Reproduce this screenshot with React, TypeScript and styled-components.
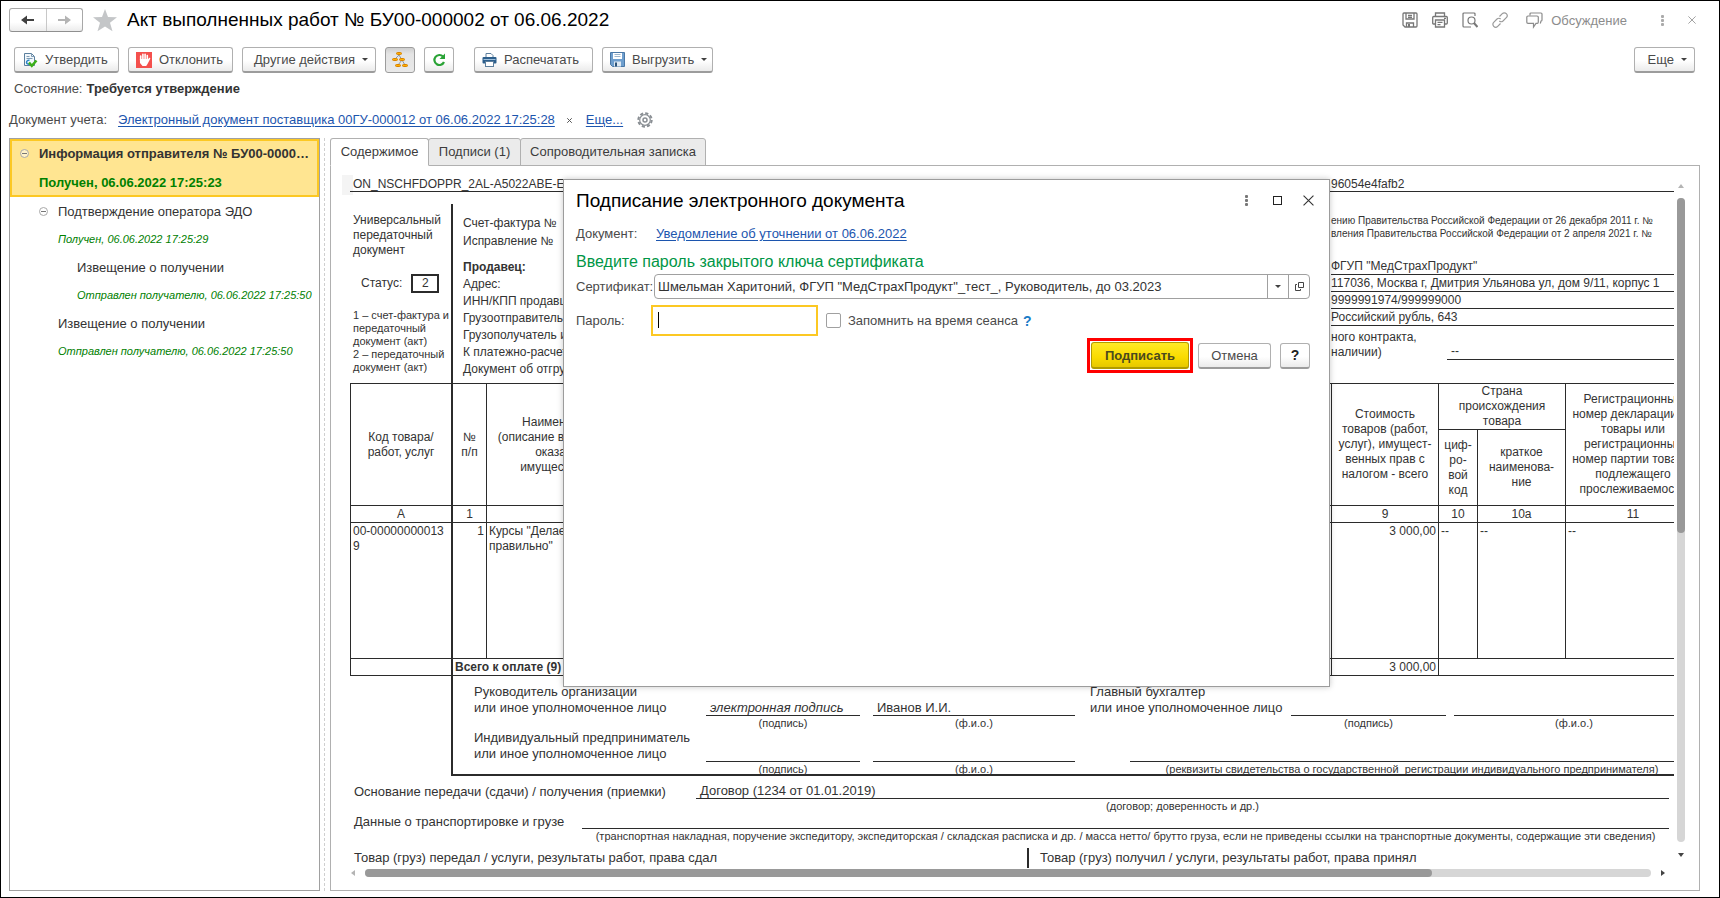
import React from "react";
import styled, { createGlobalStyle, css } from "styled-components";

const ink = "#333333";
const line = "#2b2b2b";

const GlobalStyle = createGlobalStyle`
  * { box-sizing: border-box; }
  body { margin: 0; background: #fff; }
  body, button, input, table {
    font-family: "Liberation Sans", Arial, sans-serif;
    font-size: 13px;
    color: ${ink};
  }
  button { cursor: pointer; }
  svg { display: block; flex: none; }
`;

/* ---------- window ---------- */

const Window = styled.div`
  position: relative;
  display: flex;
  flex-direction: column;
  min-height: 100vh;
  padding: 7px 19px 6px 8px;
  border: 1px solid #000;
  overflow: hidden;
`;

const TitleBar = styled.header`
  display: flex;
  align-items: center;
  height: 24px;
`;

const NavButtons = styled.div`
  display: flex;
  width: 74px;
  height: 24px;
  border: 1px solid #a8a8a8;
  border-bottom-color: #8f8f8f;
  border-radius: 3px;
  background: linear-gradient(#fff 60%, #ececec);
`;

const NavButton = styled.button`
  flex: 1;
  display: flex;
  align-items: center;
  justify-content: center;
  padding: 0;
  border: 0;
  background: none;
  & + & { border-left: 1px solid #c8c8c8; }
`;

const PlainButton = styled.button`
  display: flex;
  align-items: center;
  justify-content: center;
  padding: 0;
  border: 0;
  background: none;
  color: #8c8c8c;
`;

const StarButton = styled(PlainButton)`
  margin: 0 10px;
`;

const PageTitle = styled.h1`
  margin: 0;
  flex: 1;
  font-size: 19px;
  font-weight: 400;
  line-height: 26px;
  color: #000;
`;

const TitleTools = styled.div`
  display: flex;
  align-items: center;
  gap: 14px;
  padding-right: 4px;
`;

const DiscussButton = styled(PlainButton)`
  gap: 8px;
  margin: 0 20px 0 4px;
`;

const CloseButton = styled(PlainButton)`
  margin-left: 10px;
`;

/* ---------- toolbar ---------- */

const Toolbar = styled.div`
  display: flex;
  align-items: center;
  gap: 9px;
  padding: 15px 5px 0 5px;
`;

const ToolButton = styled.button<{ $pressed?: boolean; $width: number; $align?: "start" | "end" }>`
  display: flex;
  align-items: center;
  justify-content: ${(p) => (p.$align ? `flex-${p.$align}` : "center")};
  gap: 7px;
  width: ${(p) => p.$width}px;
  height: 26px;
  padding: 0 ${(p) => (p.$align ? 7 : 0)}px;
  white-space: nowrap;
  color: #4a4a4a;
  border: 1px solid #b0b0b0;
  border-bottom: 2px solid #9c9c9c;
  border-radius: 3px;
  background: linear-gradient(#fff 55%, #ebebeb);
  ${(p) =>
    p.$pressed &&
    css`
      border-bottom-width: 1px;
      border-color: #9c9c9c;
      background: linear-gradient(#cfcfcf, #e4e4e4 25%, #e9e9e9);
    `}
`;

const Separator = styled.span`
  width: 2px;
`;

const Push = styled.span`
  flex: 1;
`;

const Caret = styled.span`
  width: 0;
  height: 0;
  border: 3px solid transparent;
  border-top-color: #404040;
  border-bottom: 0;
`;

const StateRow = styled.p`
  display: flex;
  gap: 4px;
  margin: 0;
  padding: 8px 5px 0;
  line-height: 16px;
  color: #4a4a4a;
  b { color: ${ink}; }
`;

const SourceRow = styled.div`
  display: flex;
  align-items: center;
  padding-top: 14px;
  line-height: 18px;
  color: #4a4a4a;
`;

const Link = styled.a`
  color: #1c55ae;
  text-decoration: underline;
  text-underline-offset: 2px;
`;

const SourceLink = styled(Link)`
  margin-left: 11px;
`;

const ClearButton = styled(PlainButton)`
  margin: 0 14px 0 12px;
`;

const GearButton = styled(PlainButton)`
  margin-left: 14px;
`;

/* ---------- body ---------- */

const Body = styled.main`
  flex: 1;
  display: flex;
  padding-top: 9px;
  min-height: 0;
`;

const Tree = styled.ul`
  width: 311px;
  flex: none;
  margin: 0;
  padding: 0;
  list-style: none;
  border: 1px solid #a0a0a0;
`;

const TreeItem = styled.li<{ $level: number; $selected?: boolean }>`
  display: grid;
  grid-template-columns: 19px 1fr;
  grid-template-rows: 28px 28px;
  align-items: center;
  padding-left: ${(p) => 10 + p.$level * 19}px;
  em {
    grid-column: 2;
    font-size: 11px;
    color: #008000;
    white-space: nowrap;
  }
  ${(p) =>
    p.$selected &&
    css`
      grid-template-rows: 24px 26px;
      row-gap: 4px;
      padding: 0 6px 0 8px;
      border: 2px solid #fcc823;
      background: #ffe591;
      font-weight: 700;
      em {
        font-size: 13px;
        font-style: normal;
      }
    `}
`;

const TreeName = styled.span`
  grid-column: 2;
  overflow: hidden;
  text-overflow: ellipsis;
  white-space: nowrap;
`;

const Splitter = styled.div`
  width: 1px;
  flex: none;
  margin: 0 5px 0 4px;
  border-left: 1px dashed #cfcfcf;
`;

const Panel = styled.section`
  flex: 1;
  min-width: 0;
  display: flex;
  flex-direction: column;
`;

const Tabs = styled.div`
  display: flex;
  height: 28px;
  margin-bottom: -1px;
`;

const Tab = styled.button<{ $active?: boolean; $width: number }>`
  width: ${(p) => p.$width}px;
  padding: 0 0 2px;
  margin-right: -1px;
  white-space: nowrap;
  color: #3c3c3c;
  border: 1px solid #b0b0b0;
  border-radius: 3px 3px 0 0;
  background: #ebebeb;
  ${(p) =>
    p.$active &&
    css`
      background: #fff;
      border-bottom-color: #fff;
      z-index: 1;
    `}
`;

const TabPane = styled.div`
  flex: 1;
  display: grid;
  grid-template-columns: minmax(0, 1fr) 8px;
  grid-template-rows: auto 8px;
  column-gap: 3px;
  row-gap: 1px;
  align-content: start;
  padding: 9px 14px 12px 11px;
  border: 1px solid #b0b0b0;
`;

const VScroll = styled.div`
  display: flex;
  flex-direction: column;
  align-items: center;
  justify-content: space-between;
  padding: 8px 0 10px;
`;

const HScroll = styled.div`
  display: flex;
  align-items: center;
  justify-content: space-between;
  padding: 0 8px;
`;

const Track = styled.div<{ $vertical?: boolean }>`
  flex: 1;
  display: flex;
  flex-direction: ${(p) => (p.$vertical ? "column" : "row")};
  align-self: stretch;
  margin: ${(p) => (p.$vertical ? "9px 0 10px" : "0 9px")};
  border-radius: 4px;
  background: #d6d6d6;
`;

const Thumb = styled.div<{ $share: number }>`
  flex: 0 0 ${(p) => p.$share}%;
  border-radius: 4px;
  background: #999;
`;

/* ---------- printed form ---------- */

const Sheet = styled.article`
  overflow: hidden;
  min-height: 693px;
  padding-left: 8px;
  font-size: 12px;
  line-height: 15px;
  position: relative;
`;

const SheetInner = styled.div`
  width: 1350px;
`;

const SelectedCell = styled.span`
  position: absolute;
  left: 0;
  top: 0;
  width: 11px;
  height: 20px;
  background: #f4f4f4;
`;

const FileLine = styled.div`
  position: relative;
  display: grid;
  grid-template-columns: 978px 1fr;
  height: 17px;
  padding-left: 3px;
  line-height: 18px;
  border-bottom: 1px solid ${line};
`;

const HeaderArea = styled.div`
  display: grid;
  grid-template-columns: 101px 1fr;
  height: 179px;
  margin-top: 12px;
`;

const StatusColumn = styled.div`
  padding: 9px 0 0 3px;
`;

const StatusLine = styled.div`
  display: flex;
  align-items: center;
  gap: 9px;
  margin: 16px 0;
  padding-left: 8px;
`;

const StatusBox = styled.b`
  width: 28px;
  height: 19px;
  border: 2px solid ${line};
  font-weight: 400;
  text-align: center;
`;

const Fine = styled.p<{ $size: number }>`
  margin: 0;
  font-size: ${(p) => p.$size}px;
  line-height: 13px;
  white-space: nowrap;
`;

const Parties = styled.div`
  display: grid;
  grid-template-columns: 878px 1fr;
  border-left: 2px solid ${line};
`;

const Labels = styled.div`
  padding: 11px 0 0 10px;
  line-height: 17px;
  div { height: 17px; }
  div:nth-child(2) { margin: 1px 0 9px; }
`;

const Values = styled.div`
  padding-top: 10px;
`;

const ValueRow = styled.div`
  height: 17px;
  line-height: 17px;
  white-space: nowrap;
  border-bottom: 1px solid ${line};
`;

const Decree = styled.div`
  height: 44px;
`;

const ContractRow = styled.div`
  display: grid;
  grid-template-columns: 116px 1fr;
  align-items: end;
  padding-top: 4px;
  span { white-space: nowrap; }
`;

const ContractValue = styled.div`
  padding: 0 0 0 4px;
  border-bottom: 1px solid ${line};
`;

const Goods = styled.table`
  width: 1350px;
  table-layout: fixed;
  border-collapse: separate;
  border-spacing: 0;
  border-bottom: 1px solid ${line};
  font-size: 12px;
`;

const Cell = styled.td<{ $thick?: boolean; $end?: boolean }>`
  height: 17px;
  padding: 1px 2px 0;
  line-height: 15px;
  font-weight: 400;
  text-align: ${(p) => (p.$end ? "right" : "left")};
  vertical-align: top;
  white-space: nowrap;
  border-top: 1px solid ${line};
  border-left: ${(p) => (p.$thick ? 2 : 1)}px solid ${line};
`;

const HeadCell = styled(Cell)`
  padding: 0 2px;
  text-align: center;
  vertical-align: middle;
`;

const MarkCell = styled(Cell)`
  text-align: center;
`;

const HeadRow = styled.tr<{ $height: number }>`
  height: ${(p) => p.$height}px;
`;

const Signatures = styled.div`
  display: grid;
  grid-template-columns: 232px 154px 13px 202px 15px 40px 161px 155px 8px 240px;
  grid-template-rows: 32px 14px 32px 14px;
  height: 100px;
  margin-left: 101px;
  padding: 8px 0 0 21px;
  font-size: 13px;
  border-left: 2px solid ${line};
  border-bottom: 2px solid ${line};
`;

const SignLabel = styled.div<{ $col: string }>`
  grid-column: ${(p) => p.$col};
  line-height: 16px;
  white-space: nowrap;
`;

const SignLine = styled.div<{ $col: string }>`
  grid-column: ${(p) => p.$col};
  display: flex;
  align-items: end;
  padding-left: 4px;
  border-bottom: 1px solid ${line};
`;

const Caption = styled.div<{ $col: string }>`
  grid-column: ${(p) => p.$col};
  font-size: 11px;
  line-height: 14px;
  text-align: center;
  white-space: pre;
`;

const BasisRow = styled.div<{ $label: number; $height: number }>`
  display: grid;
  grid-template-columns: ${(p) => p.$label}px 1fr;
  grid-template-rows: ${(p) => p.$height}px 14px;
  width: 1319px;
  font-size: 13px;
  > :first-child {
    align-self: end;
    padding-left: 4px;
  }
`;

const TransferRow = styled.div`
  display: grid;
  grid-template-columns: 677px 1fr;
  height: 18px;
  margin-top: 5px;
  font-size: 13px;
  line-height: 20px;
  > * { padding-left: 4px; }
  > :last-child {
    padding-left: 11px;
    border-left: 2px solid ${line};
  }
`;

/* ---------- dialog ---------- */

const Dialog = styled.section`
  position: absolute;
  left: 562px;
  top: 178px;
  width: 767px;
  height: 508px;
  padding: 8px 19px 0 12px;
  background: #fff;
  border: 1px solid #9c9c9c;
  box-shadow: 0 0 6px rgba(0, 0, 0, 0.22);
`;

const DialogHead = styled.div`
  display: flex;
  align-items: center;
  height: 25px;
  gap: 20px;
  margin-right: -4px;
  h2 {
    flex: 1;
    margin: 0;
    font-size: 19px;
    font-weight: 400;
    color: #000;
  }
`;

const DialogButton = styled(PlainButton)`
  width: 11px;
  height: 11px;
  color: #333;
`;

const Field = styled.div<{ $height: number }>`
  display: grid;
  grid-template-columns: 78px 1fr;
  align-items: center;
  height: ${(p) => p.$height}px;
  color: #4a4a4a;
`;

const DocumentField = styled(Field)`
  margin-top: 8px;
  grid-template-columns: 80px 1fr;
`;

const PasswordField = styled(Field)`
  margin-top: 6px;
`;

const Prompt = styled.h3`
  margin: 7px 0 2px;
  font-size: 16px;
  font-weight: 400;
  line-height: 20px;
  color: #009646;
`;

const Combo = styled.div`
  display: flex;
  height: 25px;
  border: 1px solid #a0a0a0;
  border-radius: 4px;
  input {
    flex: 1;
    min-width: 0;
    padding: 0 3px;
    border: 0;
    outline: 0;
    background: none;
  }
`;

const ComboButton = styled(PlainButton)`
  width: 21px;
  border-left: 1px solid #a0a0a0;
`;

const PasswordLine = styled.div`
  display: flex;
  align-items: center;
  margin-left: -3px;
`;

const PasswordBox = styled.div`
  position: relative;
  width: 167px;
  height: 31px;
  margin-right: 8px;
  input {
    width: 100%;
    height: 100%;
    padding: 0 6px;
    border: 2px solid #fcc823;
    outline: 0;
    caret-color: transparent;
  }
`;

const TextCursor = styled.span`
  position: absolute;
  left: 7px;
  top: 7px;
  width: 1px;
  height: 16px;
  background: #000;
`;

const Remember = styled.label`
  display: flex;
  align-items: center;
  gap: 7px;
  input {
    appearance: none;
    width: 15px;
    height: 15px;
    margin: 0;
    border: 1px solid #a0a0a0;
    border-radius: 2px;
  }
`;

const Hint = styled(PlainButton)`
  margin-left: 5px;
  font-size: 14px;
  font-weight: 700;
  color: #1a7cc7;
`;

const DialogActions = styled.div`
  display: flex;
  align-items: center;
  justify-content: flex-end;
  margin-top: 2px;
`;

const Highlight = styled.div`
  padding: 1px;
  margin-right: 5px;
  border: 3px solid #ff0000;
`;

const SignButton = styled(ToolButton)`
  height: 27px;
  font-weight: 700;
  color: #4a4a1e;
  border-color: #b09b00;
  background: linear-gradient(#ffe926, #f9db00 60%, #e6c800);
`;

const HelpButton = styled(ToolButton)`
  margin-left: 9px;
  font-size: 14px;
  font-weight: 700;
  color: #222;
`;

/* ---------- icons ---------- */

const Arrow = ({ color, flip }: { color: string; flip?: boolean }) => (
  <svg width="15" height="10" viewBox="0 0 15 10">
    <path
      d={flip ? "M1 4h7V.5L14 5 8 9.500V6H1z" : "M14 4H7V.5L1 5l6 4.500V6h7z"}
      fill={color}
    />
  </svg>
);

const Star = () => (
  <svg width="24" height="23" viewBox="0 0 24 23">
    <path d="M12 0l3 8 9 .3-7 5.4 2.500 8.600L12 17.400l-7.500 4.900L7 13.700 0 8.300 9 8z" fill="#c4c6c8" />
  </svg>
);

const SaveIcon = () => (
  <svg width="16" height="16" viewBox="0 0 16 16" fill="none" stroke="#777" strokeWidth="1.300">
    <path d="M1 2q0-1 1-1h12q1 0 1 1v12q0 1-1 1H3l-2-2z" />
    <path d="M4 1v6h8V1M6 3.500h4M6 5.300h4M4.500 15v-4h7v4" />
    <path d="M6 12h2v3H6z" fill="#777" stroke="none" />
  </svg>
);

const PrintIcon = () => (
  <svg width="16" height="16" viewBox="0 0 16 16" fill="none" stroke="#777" strokeWidth="1.300">
    <path d="M3.500 4V1h9v3M3 12H1.500Q.7 12 .7 11V5.500q0-1 1-1h12.600q1 0 1 1V11q0 1-1 1H13" />
    <path d="M3.500 8h9v7h-9zM5.500 10.300h5M5.500 12.600h3M12 6.300h2" />
  </svg>
);

const PreviewIcon = () => (
  <svg width="16" height="16" viewBox="0 0 16 16" fill="none" stroke="#777" strokeWidth="1.200">
    <path d="M13 4V2q0-1-1-1H2Q1 1 1 2v12q0 1 1 1h7" />
    <circle cx="9.500" cy="8.500" r="3.500" />
    <path d="M12 11l3.500 4" strokeWidth="2" />
  </svg>
);

const LinkIcon = () => (
  <svg width="16" height="16" viewBox="0 0 16 16" fill="none" stroke="#9a9a9a" strokeWidth="1.200">
    <path d="M7.500 4.500L10.300 1.700a2.500 2.500 0 0 1 4 4L11 9q-1.800 1.500-3.700 0" />
    <path d="M8.500 11.500l-2.800 2.800a2.500 2.500 0 0 1-4-4L5 7q1.800-1.500 3.700 0" />
  </svg>
);

const ChatIcon = () => (
  <svg width="17" height="17" viewBox="0 0 17 17" fill="none" stroke="#8c8c8c" strokeWidth="1.200">
    <path d="M4 3.500V2q0-1 1-1h10q1 0 1 1v6q0 1-1 1l-.7 2.500" />
    <path d="M2 4h9q1.300 0 1.300 1v5q0 1.300-1 1.300H10L7.500 15v-3.700H2q-1.200 0-1.200-1V5Q.8 4 2 4z" />
  </svg>
);

const Dots = ({ color = "#aaa" }: { color?: string }) => (
  <svg width="3" height="11" viewBox="0 0 3 11" fill={color}>
    <rect y="0" width="3" height="3" rx="1" />
    <rect y="4" width="3" height="3" rx="1" />
    <rect y="8" width="3" height="3" rx="1" />
  </svg>
);

const Cross = ({ size, color, weight = 1 }: { size: number; color: string; weight?: number }) => (
  <svg width={size} height={size} viewBox="0 0 10 10" stroke={color} strokeWidth={weight}>
    <path d="M.5.5l9 9M9.500.5l-9 9" />
  </svg>
);

const ApproveIcon = () => (
  <svg width="16" height="16" viewBox="0 0 16 16" fill="none">
    <path d="M2.500 1.500h7l3 3v9h-10z" fill="#f2f7fb" stroke="#5b7f9d" />
    <path d="M9.500 1.500v3h3M4.500 4.500h3M4.500 6.500h6" stroke="#7f9cb5" />
    <path d="M7.500 8.500a2 2 0 1 0 0 3.500" stroke="#2c86c7" strokeWidth="1.500" />
    <path d="M7 10.500l2.800 3.300 4.700-5.300" stroke="#3db019" strokeWidth="2.500" />
  </svg>
);

const RejectIcon = () => (
  <svg width="16" height="16" viewBox="0 0 16 16">
    <rect width="16" height="16" fill="#f4504d" />
    <path
      d="M4.700 8V4M6.900 7V2.300M9.100 7V2.300M11.300 8V3.600"
      stroke="#fff"
      strokeWidth="1.600"
      strokeLinecap="round"
    />
    <path d="M3.900 7h8.300l1.300-1.500.9.900L11.500 12l-1.300 2H6.500L4 11z" fill="#fff" />
  </svg>
);

const HierarchyIcon = () => (
  <svg width="18" height="16" viewBox="0 0 18 16">
    <path d="M8 3L4 7M8 3l3 5M11 8l-4 5M11 8l3 5" stroke="#8a97a5" fill="none" />
    <g fill="#ffb000" stroke="#d98200">
      <rect x="5.500" y=".5" width="5" height="2" rx="1" />
      <rect x="1.500" y="6.500" width="5" height="2" rx="1" />
      <rect x="8.500" y="6.500" width="5" height="2" rx="1" />
      <rect x="4.500" y="12.500" width="5" height="2" rx="1" />
      <rect x="11.500" y="12.500" width="5" height="2" rx="1" />
    </g>
  </svg>
);

const RefreshIcon = () => (
  <svg width="14" height="14" viewBox="0 0 14 14" fill="none">
    <path d="M11 3.500A5 5 0 1 0 12 9" stroke="#2aa336" strokeWidth="2.200" />
    <path d="M13 .5v5.500H7.500z" fill="#2aa336" />
  </svg>
);

const PrinterColorIcon = () => (
  <svg width="15" height="14" viewBox="0 0 15 14">
    <path d="M4 4V.5h5L11 2.500V4" fill="#fff" stroke="#5d7f9d" />
    <rect x=".5" y="4" width="14" height="6.500" rx="1" fill="#2d5f8c" />
    <path d="M1.500 6.500h12" stroke="#9fc0dc" />
    <rect x="3.500" y="8.500" width="8" height="5" fill="#fff" stroke="#5d7f9d" />
  </svg>
);

const DiskIcon = () => (
  <svg width="15" height="15" viewBox="0 0 15 15">
    <path d="M.5.5h14v14h-12l-2-2z" fill="#6f9fce" stroke="#4a78a6" />
    <rect x="3" y="1" width="9" height="6" fill="#fff" />
    <path d="M4.500 2.500h6M4.500 4.500h6" stroke="#9db5cb" />
    <rect x="4" y="9.500" width="7" height="5" fill="#dfe9f2" />
    <rect x="5" y="10.500" width="2" height="4" fill="#2c5378" />
  </svg>
);

const GearIcon = () => (
  <svg width="16" height="16" viewBox="0 0 16 16" fill="none" stroke="#8a8f94">
    <circle cx="8" cy="8" r="6.700" strokeWidth="2" strokeDasharray="3.200 2.060" />
    <circle cx="8" cy="8" r="5.300" strokeWidth="1.200" />
    <circle cx="8" cy="8" r="2" strokeWidth="1.500" />
  </svg>
);

const Collapse = () => (
  <svg width="9" height="9" viewBox="0 0 9 9" fill="none">
    <circle cx="4.500" cy="4.500" r="4" stroke="#a8a8a8" fill="#fff" fillOpacity=".5" />
    <path d="M2 4.500h5" stroke="#777" />
  </svg>
);

const OpenIcon = () => (
  <svg width="9" height="9" viewBox="0 0 9 9" fill="none" stroke="#444">
    <path d="M3.500.5h5v5h-5zM2 2.500H.5v6h5V7" />
  </svg>
);

const ScrollArrow = ({ d, color }: { d: string; color: string }) => (
  <svg width="6" height="6" viewBox="0 0 6 6">
    <path d={d} fill={color} />
  </svg>
);

const lines = (parts: string[]) =>
  parts.map((part, i) => (
    <React.Fragment key={i}>
      {i > 0 && <br />}
      {part}
    </React.Fragment>
  ));

const tree = [
  { level: 0, open: true, selected: true, name: "Информация отправителя № БУ00-000002 от 06.06.2022", state: "Получен, 06.06.2022 17:25:23" },
  { level: 1, open: true, name: "Подтверждение оператора ЭДО", state: "Получен, 06.06.2022 17:25:29" },
  { level: 2, name: "Извещение о получении", state: "Отправлен получателю, 06.06.2022 17:25:50" },
  { level: 1, name: "Извещение о получении", state: "Отправлен получателю, 06.06.2022 17:25:50" },
];

const GoodsTable = () => (
  <Goods>
    <colgroup>
      {[101, 35, 196, 649, 107, 39, 88, 135].map((width, i) => (
        <col key={i} width={width} />
      ))}
    </colgroup>
    <thead>
      <HeadRow $height={46}>
        <HeadCell as="th" rowSpan={2}>{lines(["Код товара/", "работ, услуг"])}</HeadCell>
        <HeadCell as="th" rowSpan={2} $thick>{lines(["№", "п/п"])}</HeadCell>
        <HeadCell as="th" rowSpan={2}>
          {lines(["Наименование товара", "(описание выполненных работ,", "оказанных услуг),", "имущественного права"])}
        </HeadCell>
        <HeadCell as="th" rowSpan={2} />
        <HeadCell as="th" rowSpan={2}>
          {lines(["Стоимость", "товаров (работ,", "услуг), имущест-", "венных прав с", "налогом - всего"])}
        </HeadCell>
        <HeadCell as="th" colSpan={2}>{lines(["Страна", "происхождения", "товара"])}</HeadCell>
        <HeadCell as="th" rowSpan={2}>
          {lines(["Регистрационный", "номер декларации на", "товары или", "регистрационный", "номер партии товара,", "подлежащего", "прослеживаемости"])}
        </HeadCell>
      </HeadRow>
      <HeadRow $height={76}>
        <HeadCell as="th">{lines(["циф-", "ро-", "вой", "код"])}</HeadCell>
        <HeadCell as="th">{lines(["краткое", "наименова-", "ние"])}</HeadCell>
      </HeadRow>
    </thead>
    <tbody>
      <tr>
        {["А", "1", "", "", "9", "10", "10а", "11"].map((mark, i) => (
          <MarkCell key={i} $thick={i === 1}>{mark}</MarkCell>
        ))}
      </tr>
      <HeadRow $height={136}>
        <Cell>{lines(["00-00000000013", "9"])}</Cell>
        <Cell $thick $end>1</Cell>
        <Cell>{lines(['Курсы "Делаем', 'правильно"'])}</Cell>
        <Cell />
        <Cell $end>3 000,00</Cell>
        <Cell>--</Cell>
        <Cell>--</Cell>
        <Cell>--</Cell>
      </HeadRow>
      <tr>
        <Cell />
        <Cell $thick colSpan={3}><b>Всего к оплате (9)</b></Cell>
        <Cell $end>3 000,00</Cell>
        <Cell colSpan={3} />
      </tr>
    </tbody>
  </Goods>
);

const PrintedForm = () => (
  <Sheet>
    <SelectedCell />
    <SheetInner>
      <FileLine>
        <span>ON_NSCHFDOPPR_2AL-A5022ABE-E</span>
        <span>96054e4fafb2</span>
      </FileLine>
      <HeaderArea>
        <StatusColumn>
          {lines(["Универсальный", "передаточный", "документ"])}
          <StatusLine>
            Статус: <StatusBox>2</StatusBox>
          </StatusLine>
          <Fine $size={11}>
            {lines(["1 – счет-фактура и", "передаточный", "документ (акт)", "2 – передаточный", "документ (акт)"])}
          </Fine>
        </StatusColumn>
        <Parties>
          <Labels>
            <div>Счет-фактура №</div>
            <div>Исправление №</div>
            <div><b>Продавец:</b></div>
            <div>Адрес:</div>
            <div>ИНН/КПП продавца:</div>
            <div>Грузоотправитель и его адрес:</div>
            <div>Грузополучатель и его адрес:</div>
            <div>К платежно-расчетному документу №</div>
            <div>Документ об отгрузке</div>
          </Labels>
          <Values>
            <Decree>
              <Fine $size={10}>
                {lines([
                  "ению Правительства Российской Федерации от 26 декабря 2011 г. №",
                  "вления Правительства Российской Федерации от 2 апреля 2021 г. №",
                ])}
              </Fine>
            </Decree>
            <ValueRow>ФГУП "МедСтрахПродукт"</ValueRow>
            <ValueRow>117036, Москва г, Дмитрия Ульянова ул, дом 9/11, корпус 1</ValueRow>
            <ValueRow>9999991974/999999000</ValueRow>
            <ValueRow>Российский рубль, 643</ValueRow>
            <ContractRow>
              <span>{lines(["ного контракта,", "наличии)"])}</span>
              <ContractValue>--</ContractValue>
            </ContractRow>
          </Values>
        </Parties>
      </HeaderArea>
      <GoodsTable />
      <Signatures>
        <SignLabel $col="1">{lines(["Руководитель организации", "или иное уполномоченное лицо"])}</SignLabel>
        <SignLine $col="2"><i>электронная подпись</i></SignLine>
        <SignLine $col="4">Иванов И.И.</SignLine>
        <SignLabel $col="6 / 8">{lines(["Главный бухгалтер", "или иное уполномоченное лицо"])}</SignLabel>
        <SignLine $col="8" />
        <SignLine $col="10" />
        <Caption $col="2">(подпись)</Caption>
        <Caption $col="4">(ф.и.о.)</Caption>
        <Caption $col="8">(подпись)</Caption>
        <Caption $col="10">(ф.и.о.)</Caption>
        <SignLabel $col="1">{lines(["Индивидуальный предприниматель", "или иное уполномоченное лицо"])}</SignLabel>
        <SignLine $col="2" />
        <SignLine $col="4" />
        <SignLine $col="7 / 11" />
        <Caption $col="2">(подпись)</Caption>
        <Caption $col="4">(ф.и.о.)</Caption>
        <Caption $col="7 / 11">(реквизиты свидетельства о государственной  регистрации индивидуального предпринимателя)</Caption>
      </Signatures>
      <BasisRow $label={346} $height={23}>
        <div>Основание передачи (сдачи) / получения (приемки)</div>
        <SignLine $col="2">Договор (1234 от 01.01.2019)</SignLine>
        <Caption $col="2">(договор; доверенность и др.)</Caption>
      </BasisRow>
      <BasisRow $label={232} $height={16}>
        <div>Данные о транспортировке и грузе</div>
        <SignLine $col="2" />
        <Caption $col="2">
          (транспортная накладная, поручение экспедитору, экспедиторская / складская расписка и др. / масса нетто/ брутто груза, если не приведены ссылки на транспортные документы, содержащие эти сведения)
        </Caption>
      </BasisRow>
      <TransferRow>
        <div>Товар (груз) передал / услуги, результаты работ, права сдал</div>
        <div>Товар (груз) получил / услуги, результаты работ, права принял</div>
      </TransferRow>
    </SheetInner>
  </Sheet>
);

const SignDialog = () => (
  <Dialog role="dialog" aria-labelledby="dialog-title">
    <DialogHead>
      <h2 id="dialog-title">Подписание электронного документа</h2>
      <DialogButton aria-label="Меню"><Dots color="#777" /></DialogButton>
      <DialogButton aria-label="Развернуть">
        <svg width="9" height="9" viewBox="0 0 9 9" fill="none" stroke="#222">
          <rect x=".5" y=".5" width="8" height="8" />
        </svg>
      </DialogButton>
      <DialogButton aria-label="Закрыть"><Cross size={11} color="#333" /></DialogButton>
    </DialogHead>
    <DocumentField $height={24}>
      <span>Документ:</span>
      <span><Link href="#notice">Уведомление об уточнении от 06.06.2022</Link></span>
    </DocumentField>
    <Prompt>Введите пароль закрытого ключа сертификата</Prompt>
    <Field $height={25}>
      <label htmlFor="certificate">Сертификат:</label>
      <Combo>
        <input id="certificate" readOnly value={'Шмельман Харитоний, ФГУП "МедСтрахПродукт"_тест_, Руководитель, до 03.2023'} />
        <ComboButton aria-label="Выбрать"><Caret /></ComboButton>
        <ComboButton aria-label="Открыть"><OpenIcon /></ComboButton>
      </Combo>
    </Field>
    <PasswordField $height={31}>
      <label htmlFor="password">Пароль:</label>
      <PasswordLine>
        <PasswordBox>
          <input id="password" type="password" />
          <TextCursor />
        </PasswordBox>
        <Remember>
          <input type="checkbox" />
          Запомнить на время сеанса
        </Remember>
        <Hint aria-label="Подсказка">?</Hint>
      </PasswordLine>
    </PasswordField>
    <DialogActions>
      <Highlight><SignButton $width={98}>Подписать</SignButton></Highlight>
      <ToolButton $width={73}>Отмена</ToolButton>
      <HelpButton $width={30}>?</HelpButton>
    </DialogActions>
  </Dialog>
);

export default function App() {
  return (
    <Window>
      <GlobalStyle />
      <TitleBar>
        <NavButtons>
          <NavButton aria-label="Назад"><Arrow color="#404040" /></NavButton>
          <NavButton aria-label="Вперед"><Arrow color="#b4b4b4" flip /></NavButton>
        </NavButtons>
        <StarButton aria-label="В избранное"><Star /></StarButton>
        <PageTitle>Акт выполненных работ № БУ00-000002 от 06.06.2022</PageTitle>
        <TitleTools>
          <PlainButton aria-label="Сохранить"><SaveIcon /></PlainButton>
          <PlainButton aria-label="Печать"><PrintIcon /></PlainButton>
          <PlainButton aria-label="Просмотр"><PreviewIcon /></PlainButton>
          <PlainButton aria-label="Ссылка"><LinkIcon /></PlainButton>
          <DiscussButton><ChatIcon />Обсуждение</DiscussButton>
          <PlainButton aria-label="Меню"><Dots /></PlainButton>
          <CloseButton aria-label="Закрыть"><Cross size={8} color="#8c8c8c" weight={1} /></CloseButton>
        </TitleTools>
      </TitleBar>

      <Toolbar>
        <ToolButton $width={105} $align="start"><ApproveIcon />Утвердить</ToolButton>
        <ToolButton $width={105} $align="start"><RejectIcon />Отклонить</ToolButton>
        <ToolButton $width={134} $align="end">Другие действия<Caret /></ToolButton>
        <ToolButton $width={30} $pressed aria-label="Дерево"><HierarchyIcon /></ToolButton>
        <ToolButton $width={30} aria-label="Обновить"><RefreshIcon /></ToolButton>
        <Separator />
        <ToolButton $width={119} $align="start"><PrinterColorIcon />Распечатать</ToolButton>
        <ToolButton $width={111} $align="start"><DiskIcon />Выгрузить<Caret /></ToolButton>
        <Push />
        <ToolButton $width={61} $align="end">Еще<Caret /></ToolButton>
      </Toolbar>

      <StateRow>Состояние: <b>Требуется утверждение</b></StateRow>

      <SourceRow>
        Документ учета:
        <SourceLink href="#source">Электронный документ поставщика 00ГУ-000012 от 06.06.2022 17:25:28</SourceLink>
        <ClearButton aria-label="Очистить"><Cross size={5} color="#555" weight={2} /></ClearButton>
        <Link href="#more">Еще...</Link>
        <GearButton aria-label="Настройка"><GearIcon /></GearButton>
      </SourceRow>

      <Body>
        <Tree>
          {tree.map((item, i) => (
            <TreeItem key={i} $level={item.level} $selected={item.selected}>
              {item.open && <Collapse />}
              <TreeName>{item.name}</TreeName>
              <em>{item.state}</em>
            </TreeItem>
          ))}
        </Tree>
        <Splitter />
        <Panel>
          <Tabs role="tablist">
            <Tab role="tab" $active $width={99}>Содержимое</Tab>
            <Tab role="tab" $width={93}>Подписи (1)</Tab>
            <Tab role="tab" $width={186}>Сопроводительная записка</Tab>
          </Tabs>
          <TabPane>
            <PrintedForm />
            <VScroll>
              <ScrollArrow d="M0 5l3-4 3 4z" color="#b4b4b4" />
              <Track $vertical><Thumb $share={52} /></Track>
              <ScrollArrow d="M0 1l3 4 3-4z" color="#444" />
            </VScroll>
            <HScroll>
              <ScrollArrow d="M5 0L1 3l4 3z" color="#b4b4b4" />
              <Track><Thumb $share={83} /></Track>
              <ScrollArrow d="M1 0l4 3-4 3z" color="#444" />
            </HScroll>
          </TabPane>
        </Panel>
      </Body>
      <SignDialog />
    </Window>
  );
}
